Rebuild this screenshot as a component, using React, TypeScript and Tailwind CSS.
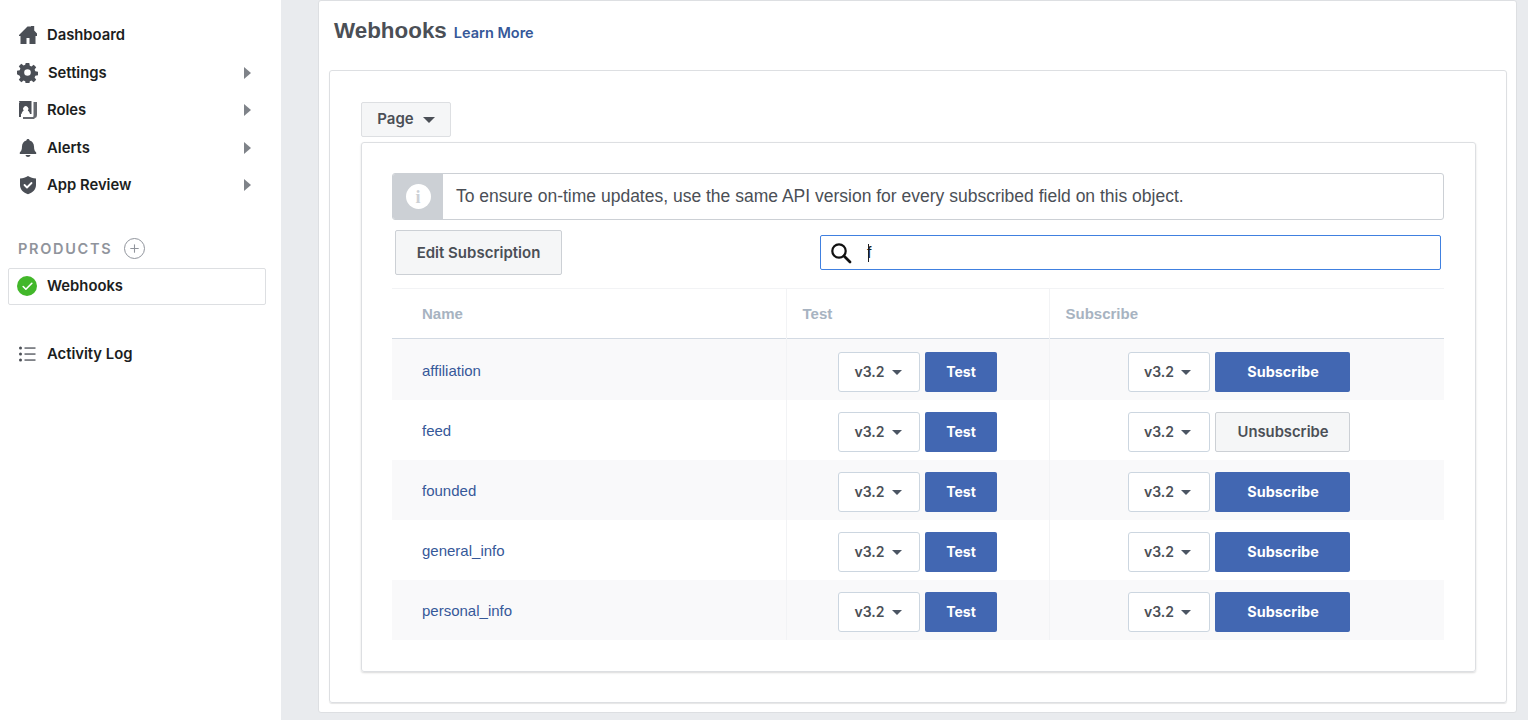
import React from 'react';
import { Plus, Check } from 'lucide-react';

const UI_FONT = "font-['Inter','Liberation_Sans',sans-serif]";

const HomeIcon = () => (
  <svg width="20" height="20" viewBox="0 0 20 20" fill="#4b4f56">
    <path d="M1 10 9.500 1.500h3.500V1h3.200v4.500L19 8.500V11h-1.500v8H11.500v-6h-3v6H2.500v-8H1z" />
  </svg>
);

const GearIcon = () => (
  <svg width="21" height="21" viewBox="0 0 21 21" fill="#4b4f56">
    <path
      fillRule="evenodd"
      d="M8.700 1h3.600l.5 2.700 1.600.7 2.300-1.600 2.500 2.500-1.600 2.300.7 1.600 2.700.5v3.600l-2.700.5-.7 1.600 1.600 2.300-2.500 2.500-2.300-1.600-1.600.7-.5 2.700H8.700l-.5-2.700-1.600-.7-2.300 1.600-2.500-2.500 1.600-2.300-.7-1.600L0 12.300V8.700l2.700-.5.7-1.600-1.600-2.300 2.500-2.500 2.300 1.600 1.600-.7zM10.500 7.200a3.300 3.300 0 1 0 0 6.600 3.300 3.300 0 0 0 0-6.600z"
    />
  </svg>
);

const RolesIcon = () => (
  <svg width="20" height="20" viewBox="0 0 20 20" fill="#4b4f56">
    <path
      fillRule="evenodd"
      d="M1 1h12.500v13H12c-.3-2-1.500-3-2.200-3.300a2.700 2.700 0 1 0-4.100 0C5 11 3.800 12 3.500 14H3V3H1.500zM1 3h2v14H1z"
    />
    <path d="M15.500 2H19v12.500c0 2.500-.8 3.500-2.500 3.500v1H5v-2h9.500c.7 0 1-.5 1-1.500z" opacity="0.85" />
  </svg>
);

const BellIcon = () => (
  <svg width="20" height="20" viewBox="0 0 20 20" fill="#4b4f56">
    <path d="M10 1c.9 0 1.500.6 1.600 1.400C14.400 3.100 16 5.500 16 8.500c0 3.600 1 4.800 2.200 6v1.500H1.800v-1.500C3 13.300 4 12.100 4 8.500c0-3 1.600-5.400 4.400-6.100C8.500 1.600 9.100 1 10 1z" />
    <path d="M7.500 17h5c-.2 1.200-1.200 2-2.500 2s-2.300-.8-2.500-2z" />
  </svg>
);

const ShieldIcon = () => (
  <svg width="20" height="20" viewBox="0 0 20 20" fill="none">
    <path fill="#4b4f56" d="M10 1c2.500 1.500 5 2.200 8 2.400V10c0 4.500-3.200 7.500-8 9.200C5.200 17.500 2 14.500 2 10V3.400C5 3.200 7.500 2.500 10 1z" />
    <path stroke="#fff" strokeWidth="1.800" strokeLinecap="round" strokeLinejoin="round" d="m6.500 10 2.500 2.500 4.500-4.500" />
  </svg>
);

const ListIcon = () => (
  <svg width="18" height="18" viewBox="0 0 18 18" fill="#4b4f56">
    <circle cx="2.500" cy="3" r="1.500" />
    <circle cx="2.500" cy="9" r="1.500" />
    <circle cx="2.500" cy="15" r="1.500" />
    <rect x="6.500" y="2.400" width="11" height="1.300" />
    <rect x="6.500" y="8.400" width="11" height="1.300" />
    <rect x="6.500" y="14.400" width="11" height="1.300" />
  </svg>
);

const SearchIcon = () => (
  <svg width="22" height="22" viewBox="0 0 22 22" fill="none" stroke="#111" strokeLinecap="round">
    <circle cx="9" cy="9" r="6.700" strokeWidth="2.200" />
    <path d="m14 14 6 6" strokeWidth="2.800" />
  </svg>
);

const navItems = [
  { label: 'Dashboard', icon: <HomeIcon />, arrow: false, extra: '', height: 'h-[38px]' },
  { label: 'Settings', icon: <GearIcon />, arrow: true, extra: 'pl-px pt-px', height: 'h-[37px]' },
  { label: 'Roles', icon: <RolesIcon />, arrow: true, extra: '', height: 'h-[38px]' },
  { label: 'Alerts', icon: <BellIcon />, arrow: true, extra: 'pt-px', height: 'h-[37px]' },
  { label: 'App Review', icon: <ShieldIcon />, arrow: true, extra: '', height: 'h-[37.5px]' },
];

const rows = [
  { name: 'affiliation', subscribed: false },
  { name: 'feed', subscribed: true },
  { name: 'founded', subscribed: false },
  { name: 'general_info', subscribed: false },
  { name: 'personal_info', subscribed: false },
];

const VersionSelect = () => (
  <div className="flex h-10 w-[82px] items-center justify-center gap-[7px] rounded-[3px] border border-[#ccd6e0] bg-white pr-[2px] text-sm font-semibold text-[#4b4f56]">
    v3.2
    <span className="mt-px h-0 w-0 border-x-[5px] border-t-[5px] border-x-transparent border-t-[#4b5563]" />
  </div>
);

const Sidebar = () => (
  <aside className={`flex w-[281px] shrink-0 flex-col bg-white pl-2 pr-[15px] pt-4 ${UI_FONT}`}>
    {navItems.map(item => (
      <div key={item.label} className={`flex items-center pl-[9px] pr-[15px] ${item.height}`}>
        <div className="flex w-[21px] justify-center">{item.icon}</div>
        <span className={`ml-[9px] flex-1 text-[14.8px] font-semibold text-[#1c1e21] ${item.extra}`}>{item.label}</span>
        {item.arrow && (
          <span className="h-0 w-0 border-y-[6px] border-l-[7px] border-y-transparent border-l-[#7f8389]" />
        )}
      </div>
    ))}
    <div className="mt-[34px] flex h-[22px] items-center gap-[12px] pl-[10px]">
      <span className="text-[14.5px] font-semibold tracking-[1.7px] text-[#90949c]">PRODUCTS</span>
      <span className="flex h-[21px] w-[21px] items-center justify-center rounded-full border-[1.5px] border-[#90949c]">
        <Plus size={13} color="#90949c" />
      </span>
    </div>
    <div className="mt-2 flex h-[37px] items-center rounded-[2px] border border-[#dddfe2] pl-2">
      <span className="flex h-5 w-5 items-center justify-center rounded-full bg-[#42b72a]">
        <Check size={13} color="#fff" strokeWidth={3} />
      </span>
      <span className="ml-[10px] text-[14.8px] font-semibold text-[#1c1e21]">Webhooks</span>
    </div>
    <div className="mt-[31px] flex h-[37px] items-center pl-[10px]">
      <ListIcon />
      <span className="ml-[11px] text-[14.8px] font-semibold text-[#1c1e21]">Activity Log</span>
    </div>
  </aside>
);

const App: React.FC = () => {
  return (
    <div className="flex h-[720px] overflow-hidden bg-[#e9ebee]">
      <Sidebar />
      <main className="ml-[37px] mr-[11px] h-[713px] flex-1 rounded-[3px] border border-[#dddfe2] bg-white pl-[10px] pr-[9px] font-['Liberation_Sans',sans-serif]">
        <div className="flex h-[69px] items-start pt-[15px] pl-[5px]">
          <h1 className="text-[22.4px] font-bold leading-[29px] text-[#4b4f56]">Webhooks</h1>
          <a className={`ml-[7px] mt-[7px] text-[14.5px] font-semibold leading-5 text-[#365899] ${UI_FONT}`}>Learn More</a>
        </div>

        <section className="h-[633px] rounded-[3px] border border-[#dddfe2] pl-[31px] pr-[30px] pt-[31px] shadow-[0_1px_1px_rgba(0,0,0,0.1)]">
          <div className={`flex h-[35px] w-[90px] items-center justify-center gap-[9px] rounded-[2px] border border-[#dddfe2] bg-[#f5f6f7] text-[15px] font-semibold text-[#4b4f56] ${UI_FONT}`}>
            Page
            <span className="h-0 w-0 border-x-[6px] border-t-[6px] border-x-transparent border-t-[#4b4f56]" />
          </div>

          <div className="mt-[5px] h-[530px] rounded-[3px] border border-[#dddfe2] pl-[30px] pr-[31px] pt-[30px] shadow-[0_1px_2px_rgba(0,0,0,0.15)]">
            <div className="flex h-[47px] overflow-hidden rounded-[3px] border border-[#ccd0d5]">
              <div className="flex w-[50px] items-center justify-center bg-[#ccd0d5]">
                <span className="flex h-[25px] w-[25px] items-center justify-center rounded-full bg-white font-['Liberation_Serif',serif] text-lg font-bold text-[#ccd0d5]">
                  i
                </span>
              </div>
              <p className="flex items-center pl-[13px] text-[17.5px] text-[#4b4f56]">
                To ensure on-time updates, use the same API version for every subscribed field on this object.
              </p>
            </div>

            <div className="mt-[10px] flex h-[45px] items-center pl-[3px]">
              <button className={`h-[45px] w-[167px] rounded-[2px] border border-[#ccd0d5] bg-[#f5f6f7] pt-[2px] text-[15px] font-semibold text-[#4b4f56] ${UI_FONT}`}>
                Edit Subscription
              </button>
              <div className="ml-[258px] flex h-[35px] w-[621px] items-center rounded-[2px] border border-[#4080e0] pl-[9px]">
                <SearchIcon />
                <span className="ml-[15px] text-base text-[#1c1e21]">f</span>
                <span className="-ml-[3px] h-[18px] w-px bg-[#1c1e21]" />
              </div>
            </div>

            <table className="mt-[13px] w-full table-fixed border-collapse border-t border-[#f2f3f5] text-[15px]">
              <colgroup>
                <col className="w-[394px]" />
                <col className="w-[263px]" />
                <col />
              </colgroup>
              <thead>
                <tr className="h-[50px] border-b border-[#d3dae3] text-left font-bold text-[#a7b3c1]">
                  <th className="pl-[30px] pt-[2px]">Name</th>
                  <th className="border-l border-[#f2f3f5] pl-4 pt-[2px]">Test</th>
                  <th className="border-l border-[#f2f3f5] pl-4 pt-[2px]">Subscribe</th>
                </tr>
              </thead>
              <tbody>
                {rows.map((row, i) => (
                  <tr key={row.name} className={`${i === 0 ? 'h-[61px]' : 'h-[60px]'} ${i % 2 === 0 ? 'bg-[#f9f9fa]' : 'bg-white'}`}>
                    <td className="pl-[30px] pt-[3px] text-[#365899]">{row.name}</td>
                    <td className={`border-l border-[#f2f3f5] ${i === 0 ? 'pt-[5px]' : 'pt-[4px]'}`}>
                      <div className={`flex justify-center gap-[5px] ${UI_FONT}`}>
                        <VersionSelect />
                        <button className="h-10 w-[72px] rounded-[2px] bg-[#4267b2] text-sm font-bold text-white">Test</button>
                      </div>
                    </td>
                    <td className={`border-l border-[#f2f3f5] ${i === 0 ? 'pt-[5px]' : 'pt-[4px]'}`}>
                      <div className={`flex gap-[5px] pl-[78px] ${UI_FONT}`}>
                        <VersionSelect />
                        {row.subscribed ? (
                          <button className="h-10 w-[135px] rounded-[2px] border border-[#ccd0d5] bg-[#f5f6f7] pl-[2px] pt-[2px] text-[14.8px] font-semibold text-[#4b4f56]">
                            Unsubscribe
                          </button>
                        ) : (
                          <button className="h-10 w-[135px] rounded-[2px] bg-[#4267b2] pl-[2px] text-[14.4px] font-bold text-white">
                            Subscribe
                          </button>
                        )}
                      </div>
                    </td>
                  </tr>
                ))}
              </tbody>
            </table>
          </div>
        </section>
      </main>
    </div>
  );
};

export default App;
